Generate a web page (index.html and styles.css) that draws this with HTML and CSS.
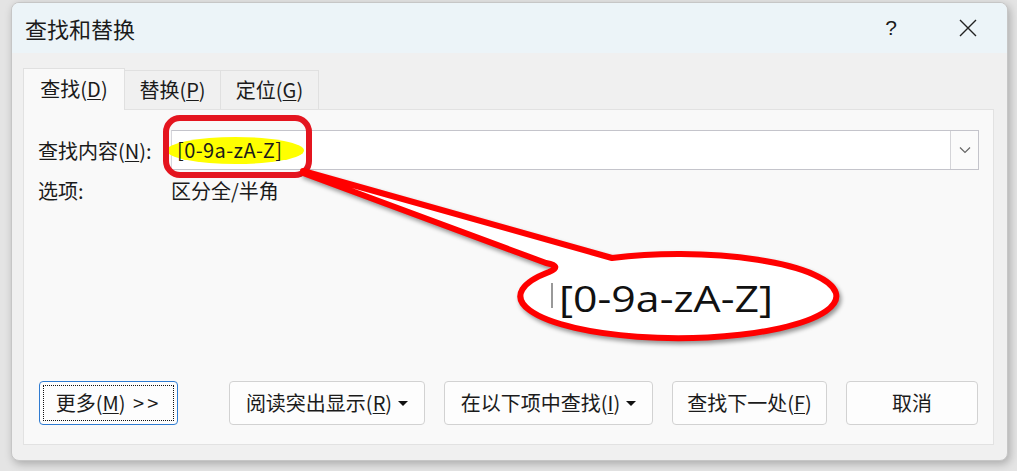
FILE: index.html
```html
<!DOCTYPE html>
<html lang="zh">
	<head>
		<meta charset="utf-8">
		<title>查找和替换</title>
		<link rel="stylesheet" href="styles.css">
	</head>
	<body>
		<div class="dialog">
			<div class="titlebar">
				<span class="title">查找和替换</span>
				<span class="help">?</span>
				<span class="close">
					<svg width="18" height="18" viewBox="0 0 18 18"><path d="M1 1L17 17M17 1L1 17" stroke="#222" stroke-width="1.4" fill="none"/></svg>
				</span>
			</div>
			<div class="tabs">
				<span class="tab current">查找(<u>D</u>)</span>
				<span class="tab">替换(<u>P</u>)</span>
				<span class="tab">定位(<u>G</u>)</span>
			</div>
			<div class="panel">
				<div class="row">
					<label class="label">查找内容(<u>N</u>):</label>
					<div class="combo">
						<span class="mark">[0-9a-zA-Z]</span>
						<span class="drop">
							<svg width="12" height="8" viewBox="0 0 12 8"><path d="M1 1.5L6 6.5L11 1.5" stroke="#666" stroke-width="1.2" fill="none"/></svg>
						</span>
					</div>
				</div>
				<div class="row options">
					<span class="label">选项:</span>
					<span>区分全/半角</span>
				</div>
				<div class="buttons">
					<span class="btn more"><span class="focus">更多(<u>M</u>) <span class="arrows">&gt;&gt;</span></span></span>
					<span class="btn reading">阅读突出显示(<u>R</u>)<i class="caret"></i></span>
					<span class="btn within">在以下项中查找(<u>I</u>)<i class="caret"></i></span>
					<span class="btn next">查找下一处(<u>F</u>)</span>
					<span class="btn cancel">取消</span>
				</div>
			</div>
		</div>

		<!-- 标注: 红框 + 气泡 -->
		<svg class="note" width="1017" height="471" viewBox="0 0 1017 471">
			<rect x="166" y="118" width="143" height="57" rx="14" fill="none" stroke="#e4151f" stroke-width="6"/>
			<path class="bubble" d="M303 171 L612 258 A158 42 0 1 1 549 272 Q563 266 546 263 L303 173 Z" fill="#fff" stroke="#ff0000" stroke-width="6" stroke-linejoin="round"/>
			<line x1="552" y1="283" x2="552" y2="308" stroke="#999" stroke-width="2"/>
			<text x="559" y="312" textLength="214" lengthAdjust="spacingAndGlyphs" class="big">[0-9a-zA-Z]</text>
		</svg>
	</body>
</html>
```

FILE: styles.css
```css
* {
  margin: 0;
  padding: 0;
  box-sizing: border-box;
}

body {
  width: 1017px;
  height: 471px;
  overflow: hidden;
  position: relative;
  background-color: #e4e4e4;
  font-family: "Noto Sans CJK SC", "Noto Sans", sans-serif;
  font-size: 20px;
  color: #1b1b1b;
}

u {
  text-decoration: underline;
  text-underline-offset: 2px;
  text-decoration-thickness: 1px;
}

.dialog {
  margin: 2px 0 0 11px;
  width: 997px;
  height: 459px;
  background-color: #f0f0f0;
  border: 1px solid #c6c6c6;
  border-radius: 8px;
  box-shadow: 2px 3px 8px rgba(0, 0, 0, .25);
  overflow: hidden;
  display: flex;
  flex-direction: column;
}

.titlebar {
  height: 50px;
  flex: none;
  background-color: #ecf4f8;
  display: flex;
  align-items: center;
  padding-left: 13px;
}

.title {
  font-size: 22px;
  flex: 1;
}

.help {
  font-family: "Liberation Sans", sans-serif;
  font-size: 21px;
  width: 20px;
  text-align: center;
  margin-right: 58px;
}

.close {
  display: flex;
  margin-right: 30px;
}

.tabs {
  display: flex;
  align-items: flex-end;
  margin-top: 15px;
  padding-left: 11px;
  height: 41px;
  flex: none;
}

.tab {
  height: 39px;
  line-height: 38px;
  text-align: center;
  background-color: #f0f0f0;
  border: 1px solid #e0e0e0;
  border-bottom: none;
  border-left: none;
}

.tab:nth-child(2) {
  width: 96px;
}

.tab:nth-child(3) {
  width: 98px;
}

.tab.current {
  width: 102px;
  height: 42px;
  line-height: 40px;
  background-color: #f9f9f9;
  border-left: 1px solid #e0e0e0;
  margin-bottom: -1px;
  position: relative;
  z-index: 1;
}

.panel {
  flex: 1;
  margin: 0 13px 15px 11px;
  background-color: #f9f9f9;
  border: 1px solid #e2e2e2;
  padding: 20px 14px 19px 14px;
  display: flex;
  flex-direction: column;
}

.row {
  display: flex;
  align-items: center;
}

.label {
  width: 133px;
  flex: none;
}

.combo {
  width: 809px;
  height: 40px;
  background-color: #fff;
  border: 1px solid #c4c4cb;
  border-left-color: #d6d6dc;
  display: flex;
  align-items: center;
}

.mark {
  display: inline-block;
  margin-left: -5px;
  padding: 0 22px 0 10px;
  height: 27px;
  line-height: 26px;
  background-color: #ffff00;
  border-radius: 50%;
  font-size: 20px;
  letter-spacing: .4px;
}

.drop {
  margin-left: auto;
  width: 28px;
  height: 38px;
  border-left: 1px solid #d4d4d8;
  background-color: #fbfbfb;
  display: flex;
  align-items: center;
  justify-content: center;
}

.options {
  margin-top: 7px;
  line-height: 28px;
}

.buttons {
  margin-top: auto;
  display: flex;
  margin-left: 1px;
}

.btn {
  height: 44px;
  line-height: 42px;
  text-align: center;
  background-color: #fdfdfd;
  border: 1px solid #d2d2d2;
  border-radius: 4px;
  display: flex;
  align-items: center;
  justify-content: center;
}

.btn.more {
  width: 139px;
  border: 1px solid #2f7bd1;
  padding: 3px;
}

.focus {
  display: block;
  width: 100%;
  height: 100%;
  line-height: 34px;
  border: 1px dotted #111;
}

.arrows {
  letter-spacing: 3px;
  margin-left: 3px;
}

.btn.reading {
  width: 196px;
  margin-left: 51px;
}

.btn.within {
  width: 209px;
  margin-left: 19px;
}

.btn.next {
  width: 155px;
  margin-left: 19px;
}

.btn.cancel {
  width: 132px;
  margin-left: 19px;
}

.caret {
  display: inline-block;
  margin-left: 6px;
  border-left: 5px solid transparent;
  border-right: 5px solid transparent;
  border-top: 5px solid #111;
}

.note {
  position: absolute;
  top: 0;
  left: 0;
  pointer-events: none;
}

.bubble {
  filter: drop-shadow(2px 3px 2px rgba(0, 0, 0, .4));
}

.big {
  font-family: "Open Sans", "Noto Sans", sans-serif;
  font-size: 36px;
  fill: #111;
}
```
